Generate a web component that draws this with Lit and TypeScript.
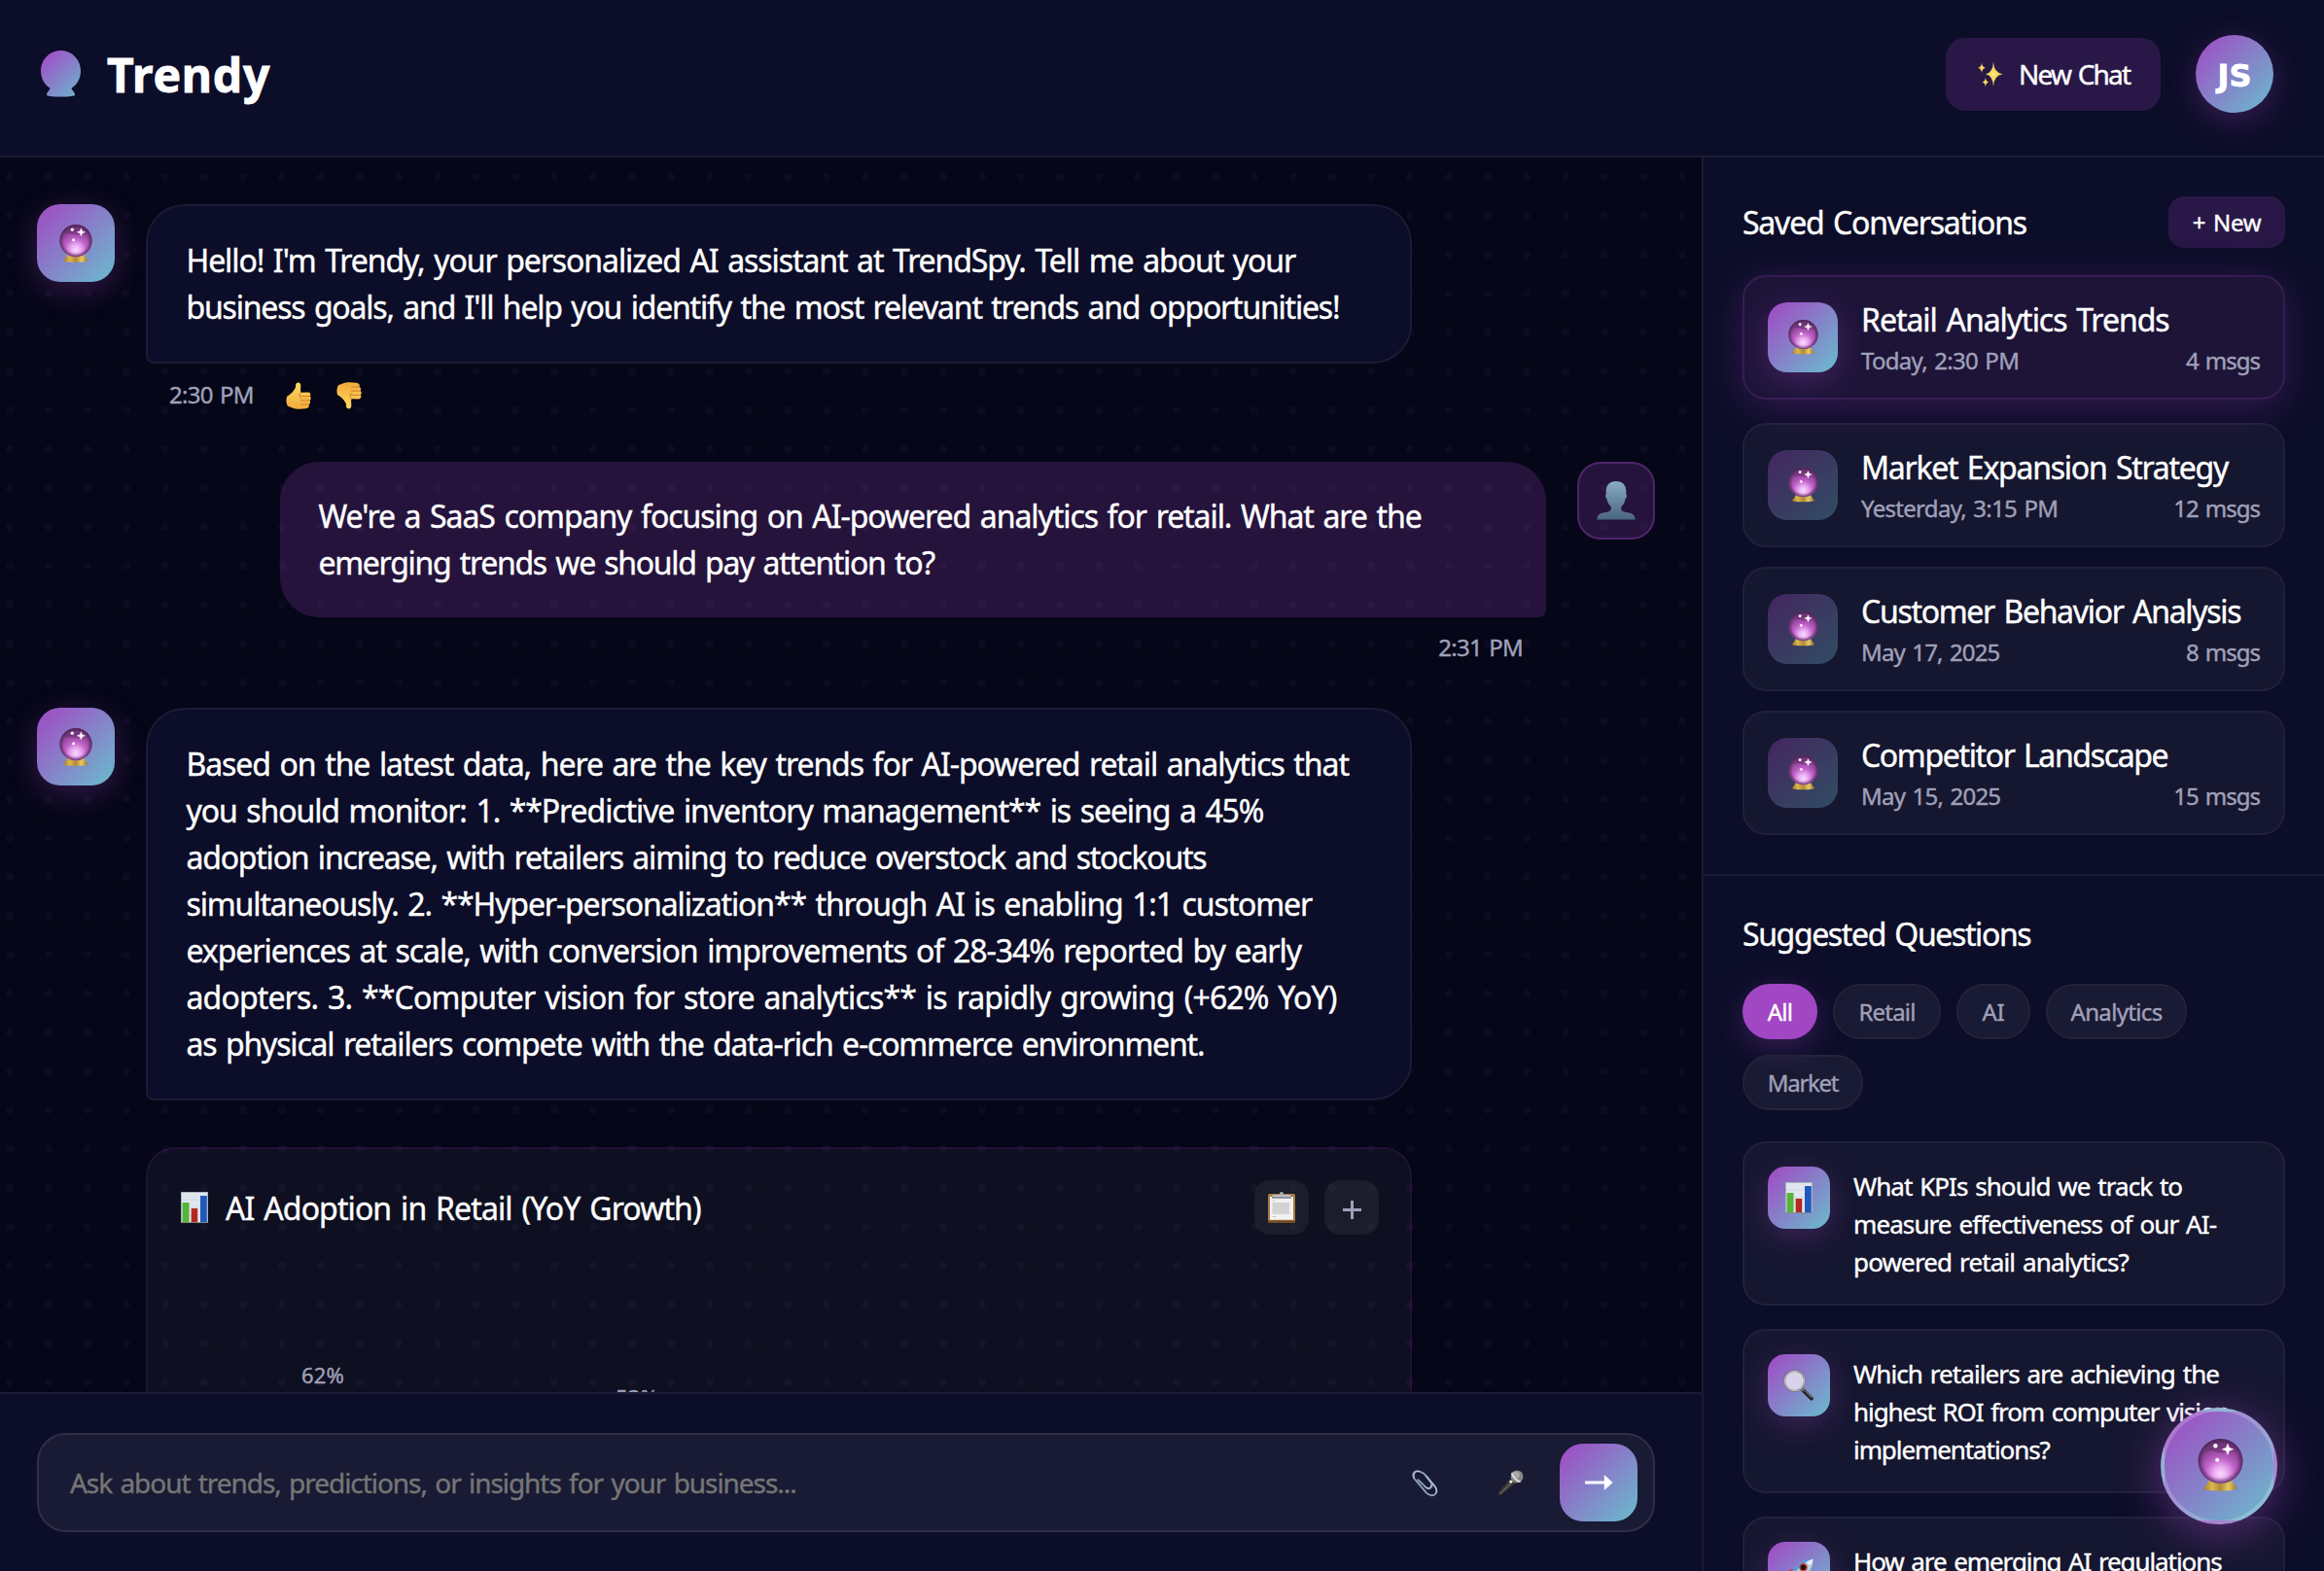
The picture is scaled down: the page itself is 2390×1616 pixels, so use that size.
import { LitElement, html, css, svg, nothing } from "lit";
import { customElement, property } from "lit/decorators.js";
import { classMap } from "lit/directives/class-map.js";

const crystalBall = svg`
  <defs>
    <radialGradient id="ball" cx="0.5" cy="0.78" r="0.8">
      <stop offset="0" stop-color="#fbd9ff"/>
      <stop offset="0.18" stop-color="#ecaef3"/>
      <stop offset="0.42" stop-color="#c062ca"/>
      <stop offset="0.7" stop-color="#8f4496"/>
      <stop offset="1" stop-color="#522860"/>
    </radialGradient>
    <radialGradient id="ballRim" cx="0.5" cy="0.5" r="0.5">
      <stop offset="0.74" stop-color="#5a2a62" stop-opacity="0"/>
      <stop offset="1" stop-color="#4a2254" stop-opacity="0.8"/>
    </radialGradient>
    <linearGradient id="ballStand" x1="0" y1="0" x2="1" y2="0">
      <stop offset="0" stop-color="#a87c2a"/>
      <stop offset="0.25" stop-color="#dcb850"/>
      <stop offset="0.5" stop-color="#b18a34"/>
      <stop offset="0.74" stop-color="#e8c964"/>
      <stop offset="1" stop-color="#98742a"/>
    </linearGradient>
  </defs>
  <path d="M8.200 31h17.600c.6 2.400 2 3.900 3.500 5.400.9 1.500-4 2.400-12.300 2.400S3.800 37.900 4.700 36.400C6.200 34.900 7.600 33.400 8.200 31Z" fill="url(#ballStand)"/>
  <circle cx="17" cy="16.600" r="16.600" fill="url(#ball)"/>
  <circle cx="17" cy="16.600" r="16.600" fill="url(#ballRim)"/>
  <path d="M6 10C9 3 25 2.500 28.500 10.500 24 7.500 21 11 17 10.500S9 7.500 6 10Z" fill="#4c2156" opacity=".35"/>
  <circle cx="13.300" cy="5.200" r="1.600" fill="#fff"/>
  <path d="M22.400 3.800l1.100 2.900 3 1.100-3 1.100-1.100 2.900-1.100-2.900-3-1.100 3-1.100Z" fill="#fff" stroke="#ffe6ff" stroke-width=".5"/>
  <circle cx="14.600" cy="15.700" r="1.500" fill="#fff" opacity=".95"/>`;

const thumb = svg`
  <defs><linearGradient id="thumbFill" x1="0" y1="0" x2="0" y2="1">
    <stop offset="0" stop-color="#ffdb62"/><stop offset="1" stop-color="#f2a93a"/>
  </linearGradient></defs>
  <path d="M10.800 1.200C12.600-.3 15.200.4 15.300 3.400 15.400 6.200 14.800 8 15.400 10.800L23 10.600C25.600 10.700 26 13.600 24.600 14.500 26.300 15.800 26 18 24.600 18.900 25.600 20.300 25.100 22.300 23.700 23 24.300 25.400 23 27 20.600 27.300 15 28.100 9.500 28 6 26.300L1.800 24.800C.2 21.500 0 17.500 1.200 14.800 4 13.300 8.600 9.300 9.900 5.600 10.200 4.200 9.700 2.200 10.800 1.200Z" fill="url(#thumbFill)"/>
  <path d="M15.400 14.600h9M15.200 18.900h9.200M15.600 23h8M15.400 10.900c-1.800 1.500-2 4-.2 5.500" fill="none" stroke="#c9792a" stroke-width=".9" stroke-linecap="round"/>`;

const ICONS: Record<string, { w: number; h: number; art: unknown }> = {
  ball: { w: 34, h: 39, art: crystalBall },
  up: { w: 26, h: 28, art: thumb },
  down: { w: 26, h: 28, art: svg`<g transform="matrix(1 0 0 -1 0 28)">${thumb}</g>` },
  logo: {
    w: 41, h: 48,
    art: svg`<defs><linearGradient id="logoFill" gradientUnits="userSpaceOnUse" x1="2" y1="2" x2="42" y2="44">
        <stop offset="0" stop-color="#a24ac5"/><stop offset="1" stop-color="#6cb4cf"/></linearGradient></defs>
      <path d="M20.500 0C32 0 41 9.400 41 21c0 7.800-3.900 14.300-9.600 17.800.6 2.300 3.700 4.400 3.700 6.600 0 1.400-6 2.200-14.600 2.200S5.900 46.800 5.900 45.400c0-2.200 3.100-4.300 3.700-6.600C3.900 35.300 0 28.800 0 21 0 9.400 9 0 20.500 0Z" fill="url(#logoFill)"/>`,
  },
  sparkles: {
    w: 28, h: 28,
    art: svg`<g fill="#f7d95c">
      <path d="M17 1.500Q17.500 12.800 26.500 14.300 17.500 15.800 17 27 16.500 15.800 9 14.300 16.500 12.800 17 1.500Z"/>
      <path d="M5 2.500Q5.400 7 9 7.800 5.400 8.600 5 13 4.600 8.600 1.200 7.800 4.600 7 5 2.500Z"/>
      <path d="M8.900 17.800Q9.200 21.800 12.400 22.500 9.200 23.200 8.900 27.500 8.600 23.200 5.400 22.500 8.600 21.800 8.900 17.800Z"/></g>
      <circle cx="17" cy="14.300" r="1.900" fill="#ffeb90"/>`,
  },
  chart: {
    w: 28, h: 32,
    art: svg`<rect width="28" height="32" fill="#dfe6ee"/><path d="M0 .5h28M.5 0v32M27.500 0v32" stroke="#aab4c2"/>
      <path d="M1 8h26M1 16h26M1 24h26" stroke="#cdd6e0" stroke-width=".8"/>
      <rect x="1.500" y="11" width="7" height="20.500" fill="#55b53a"/><rect x="10.700" y="17" width="6.500" height="14.500" fill="#b3281f"/>
      <rect x="20" y="4" width="6.800" height="27.500" fill="#2258bd"/><path d="M0 31.600h28" stroke="#6f7d74" stroke-width=".8"/>`,
  },
  user: {
    w: 40, h: 40,
    art: svg`<defs><linearGradient id="bust" x1="0" y1="0" x2="0" y2="1"><stop offset="0" stop-color="#8aabc7"/><stop offset="1" stop-color="#4a6482"/></linearGradient></defs>
      <path d="M20 0c6.500 0 10.300 4 10.300 10.400v3c1.200.6.700 3.700-.7 4.400-.6 4-2 6.300-4.300 8.400v2.600c0 2.200 2.600 2.700 6.700 3.400 4.400.8 7.400 1.800 7.700 7.400H.3c.3-5.600 3.300-6.600 7.700-7.400 4.100-.7 6.700-1.200 6.700-3.400v-2.600c-2.300-2.100-3.700-4.400-4.300-8.400-1.400-.7-1.900-3.800-.7-4.400v-3C9.700 4 13.500 0 20 0Z" fill="url(#bust)"/>
      <path d="M.3 39.400h39.400" stroke="#2f4560" stroke-width="1"/>`,
  },
  clipboard: {
    w: 28, h: 32,
    art: svg`<rect y="2" width="28" height="30" rx="1.500" fill="#a87c40"/><rect y="29.500" width="28" height="2.500" rx="1" fill="#6e4d20"/>
      <path d="M2 5h24v23.800H2z" fill="#f1f1f1"/><path d="M4.500 11h17.500v11l1 1H4.500z" fill="#d3d3d3"/>
      <path d="M4.500 9h3M4.500 25.500h4" stroke="#c8c8c8"/><path d="M5 3h18l1 3.200H4z" fill="#b9c0c8"/><path d="M4 6h20" stroke="#6d6d70" stroke-width="1.200"/>
      <circle cx="14" cy="2" r="2" fill="#a9afb8"/>`,
  },
  clip: {
    w: 28, h: 28,
    art: svg`<g fill="none" stroke-linecap="round"><path d="M13.800 5.200 20.500 13.800C23 17.500 19.500 22 15.500 19L6.500 10.500M13 4 8.200 1.600C3-.3-.8 4.500 2.600 9.400L15.500 24.500C19 28.300 24 27.800 25.700 25 27 22.800 26.300 20 24.500 17.500L14.500 5.500" stroke="#8fa3bd" stroke-width="1.900"/>
      <path d="M8.200 1.800C4.200.6 1.200 4 2.600 8M25.800 24.500C27 22 25.800 19.500 24 17L15.500 6.500M14 18.300c3.400 2.700 6.500.6 6.300-2.300" stroke="#d5dfea" stroke-width=".8"/></g>`,
  },
  mic: {
    w: 28, h: 28,
    art: svg`<path d="M15.300 7.500 20.800 13 3.600 26.700c-1.500.8-3.500-.8-2.700-2.700Z" fill="#3a3836"/>
      <path d="M15.500 8.500 18 10.500 3 25.200" stroke="#6e6a66" stroke-width="1.100" fill="none"/>
      <circle cx="20.800" cy="7.200" r="6.700" fill="#858585"/><circle cx="19.800" cy="5.400" r="3.800" fill="#a9a9a8"/>
      <path d="M15.200 3.400c1 4.200 4.800 8.200 9.300 9.200" stroke="#e6e6e4" stroke-width="1.600" fill="none"/><circle cx="14.300" cy="12.600" r="1.500" fill="#f4f2ee"/>`,
  },
  arrow: { w: 30, h: 17, art: svg`<path d="M0 6.800h20.500V0L29.500 8.300 20.500 16.600V9.800H0z" fill="#fff"/>` },
  search: {
    w: 32, h: 32,
    art: svg`<path d="M20.500 18.500 31 29c.6.900-1.700 3.200-2.800 2.600L18 21.500z" fill="#1f1f22"/><path d="M22 21.500 29.500 29" stroke="#6d6d72" stroke-width="1.200"/>
      <path d="M17.500 18l3.500 3.500" stroke="#77777a" stroke-width="2.600"/>
      <circle cx="11.500" cy="11.500" r="10.400" fill="#d9d3ea" stroke="#77797e" stroke-width="2"/><circle cx="11.500" cy="11.500" r="10.200" fill="none" stroke="#c9ccd0" stroke-width=".9"/>`,
  },
  rocket: {
    w: 32, h: 32,
    art: svg`<path d="M12 11.500C8 10.800 4.500 13 2.500 17.500l6.500-1zM20.500 20c.7 4-1.500 7.500-6 9.500l1-6.500z" fill="#d8362c"/>
      <path d="M31.300.8c.8 7.500-2.300 14.500-14.300 23.700L7.500 15C16.500 3.500 24 .2 31.300.8Z" fill="#b9cadb"/><path d="M31.300.8C24 .2 16.500 3.500 7.500 15l2.500 2.500C17 8 24 3 31.300.8Z" fill="#4b9ae0"/>
      <path d="M31.300.8c-3 .8-5 2-7 3.500l3.500 3.600c2-2.100 3.300-4.400 3.500-7.100Z" fill="#e8f0f7"/>
      <circle cx="20.800" cy="9.800" r="3.800" fill="#16161c" stroke="#d3402f" stroke-width="1.600"/><path d="M8 17l7 7-4 2.500L5.500 21z" fill="#e8542e"/><path d="M6 22l4 4-8 4.500z" fill="#f6b33c"/>`,
  },
};

@customElement("ui-icon")
class UiIcon extends LitElement {
  @property() name = "ball";
  @property({ type: Number }) width = 34;
  static styles = css`
    :host { display: inline-flex; flex: none; }
    svg { display: block; overflow: visible; }
  `;
  render() {
    const i = ICONS[this.name];
    return html`<svg width=${this.width} height=${(this.width * i.h) / i.w} viewBox="0 0 ${i.w} ${i.h}" aria-hidden="true">${i.art}</svg>`;
  }
}

/** A run of text with its average tracking in pixels. */
type Run = [text: string, tracking: number];

/** Extra width of each word space, in em; the letters give it back so a run keeps its length. */
const WORD_SPACE = 0.075;

const icon = (name: string, width: number) => html`<ui-icon name=${name} .width=${width}></ui-icon>`;
const run = ([text, tracking]: Run) => {
  const share = (WORD_SPACE * (text.split(" ").length - 1)) / text.length;
  return html`<span style="letter-spacing:calc(${tracking}px - ${share.toFixed(4)}em)">${text}</span>`;
};
const lines = (l: Run[]) => l.map((r, i) => html`${i ? html`<br>` : nothing}${run(r)}`);

const GREETING: Run[] = [
  ["Hello! I'm Trendy, your personalized AI assistant at TrendSpy. Tell me about your", -0.73],
  ["business goals, and I'll help you identify the most relevant trends and opportunities!", -0.87],
];
const QUESTION: Run[] = [
  ["We're a SaaS company focusing on AI-powered analytics for retail. What are the", -0.7],
  ["emerging trends we should pay attention to?", -0.97],
];
const ANSWER: Run[] = [
  ["Based on the latest data, here are the key trends for AI-powered retail analytics that", -0.69],
  ["you should monitor: 1. **Predictive inventory management** is seeing a 45%", -0.77],
  ["adoption increase, with retailers aiming to reduce overstock and stockouts", -0.93],
  ["simultaneously. 2. **Hyper-personalization** through AI is enabling 1:1 customer", -0.89],
  ["experiences at scale, with conversion improvements of 28-34% reported by early", -0.76],
  ["adopters. 3. **Computer vision for store analytics** is rapidly growing (+62% YoY)", -0.54],
  ["as physical retailers compete with the data-rich e-commerce environment.", -0.92],
];
const SAVED: { title: Run; when: Run; count: Run; active?: boolean }[] = [
  { title: ["Retail Analytics Trends", -0.82], when: ["Today, 2:30 PM", -0.45], count: ["4 msgs", -0.7], active: true },
  { title: ["Market Expansion Strategy", -1.06], when: ["Yesterday, 3:15 PM", -0.5], count: ["12 msgs", -0.75] },
  { title: ["Customer Behavior Analysis", -1.12], when: ["May 17, 2025", -0.52], count: ["8 msgs", -0.7] },
  { title: ["Competitor Landscape", -1.24], when: ["May 15, 2025", -0.45], count: ["15 msgs", -0.75] },
];
const CHIPS: { label: Run; width: number }[] = [
  { label: ["All", -0.7], width: 77 },
  { label: ["Retail", -0.8], width: 111 },
  { label: ["AI", -0.3], width: 76 },
  { label: ["Analytics", -0.65], width: 145 },
  { label: ["Market", -1.3], width: 124 },
];
const SUGGESTED: { icon: string; size: number; text: Run[] }[] = [
  { icon: "chart", size: 28, text: [["What KPIs should we track to", -0.6], ["measure effectiveness of our AI-", -0.66], ["powered retail analytics?", -0.7]] },
  { icon: "search", size: 32, text: [["Which retailers are achieving the", -0.67], ["highest ROI from computer vision", -0.83], ["implementations?", -1.08]] },
  { icon: "rocket", size: 30, text: [["How are emerging AI regulations", -0.83]] },
];

@customElement("app-root")
class AppRoot extends LitElement {
  static styles = css`
    :host {
      --purple: #a247c4;
      --grad: linear-gradient(135deg, #a247c4, #69bdcd);
      --glow: rgba(162, 71, 196, 0.3);
      --panel: #0c0d28;
      --line: #1a1b34;
      --muted: #a0a0b8;
      display: flex; flex-direction: column; width: 2390px; height: 1616px; overflow: hidden; position: relative;
      background: #050617; color: #fff;
      font-family: "Noto Sans", "Open Sans", sans-serif; font-size: 32px;
      -webkit-text-stroke: 0.4px currentColor;
    }
    * { box-sizing: border-box; word-spacing: 0.075em; }
    .header { flex: none; height: 162px; display: flex; align-items: center; padding: 36px 52px 44px 42px; background: var(--panel); border-bottom: 2px solid var(--line); }
    .brand { display: flex; align-items: center; gap: 27px; flex: 1; }
    .brand-name { font-size: 48px; font-weight: 700; letter-spacing: 0.8px; line-height: 56px; padding-top: 1px; -webkit-text-stroke-width: 0.9px; }
    .new-chat { display: flex; align-items: center; gap: 15px; width: 221px; height: 75px; padding-left: 32px; border-radius: 20px; background: rgba(162, 71, 196, 0.2); font-size: 28px; letter-spacing: -1.8px; white-space: nowrap; }
    .profile { width: 80px; height: 80px; margin-left: 36px; border-radius: 50%; background: var(--grad); box-shadow: 0 8px 32px var(--glow); display: flex; align-items: center; justify-content: center; padding-top: 3px; font: 700 32px "DejaVu Sans", sans-serif; letter-spacing: 0; -webkit-text-stroke-width: 0.8px; }
    .body { flex: 1; min-height: 0; display: flex; }
    .main { width: 1750px; display: flex; flex-direction: column; }
    .messages { flex: 1; min-height: 0; overflow: hidden; padding: 48px 48px 0 38px; display: flex; flex-direction: column; gap: 48px;
      background: radial-gradient(circle at 10px 20px, rgba(162, 71, 196, 0.055) 3.700px, transparent 4.500px) 0 0 / 40px 40px; }
    .message { flex: none; display: flex; gap: 32px; }
    .message.mine { flex-direction: row-reverse; }
    .avatar { flex: none; width: 80px; height: 80px; border-radius: 24px; display: flex; align-items: center; justify-content: center; background: var(--grad); box-shadow: 0 8px 32px var(--glow); }
    .mine .avatar { background: rgba(162, 71, 196, 0.21); border: 2px solid rgba(162, 71, 196, 0.34); box-shadow: none; }
    .column { width: 1302px; }
    .bubble { line-height: 48px; padding: 32px 40px 32px 39.500px; border: 2px solid var(--line); border-radius: 40px 40px 40px 8px; background: var(--panel); white-space: nowrap; }
    .mine .bubble { border: none; border-radius: 40px 40px 8px 40px; background: rgba(162, 71, 196, 0.21); }
    .meta { display: flex; align-items: center; height: 41px; margin-top: 12px; padding: 0 24px; font-size: 24px; letter-spacing: -0.75px; color: var(--muted); }
    .time { padding-bottom: 3px; }
    .mine .meta { height: 27px; margin-top: 18px; justify-content: flex-end; }
    .mine .time { padding-bottom: 2px; }
    .react { display: flex; gap: 26px; margin-left: 33px; }
    .chart { flex: none; margin-left: 112px; width: 1302px; height: 560px; padding: 32px; border: 2px solid rgba(162, 71, 196, 0.18); border-radius: 30px; background: rgba(255, 255, 255, 0.04); background-clip: padding-box; }
    .chart-head { display: flex; align-items: center; gap: 16px; height: 56px; }
    .chart-title { display: flex; align-items: center; gap: 18px; flex: 1; padding-left: 2px; letter-spacing: -0.9px; }
    .tool { width: 56px; height: 56px; border-radius: 16px; background: rgba(255, 255, 255, 0.055); display: flex; align-items: center; justify-content: center; color: var(--muted); }
    .plus { width: 19px; height: 19px; margin-top: 4px; background: linear-gradient(var(--muted), var(--muted)) center / 100% 3px no-repeat, linear-gradient(var(--muted), var(--muted)) center / 3px 100% no-repeat; }
    .plot { display: grid; grid-template-columns: 296px 350px 1fr; font-size: 22px; line-height: 26px; letter-spacing: 0.1px; color: var(--muted); text-align: center; }
    .value { padding-top: calc(131px + var(--drop)); }
    .composer { flex: none; height: 184px; padding: 40px 48px 40px 38px; background: var(--panel); border-top: 2px solid var(--line); }
    .field { display: flex; align-items: center; height: 102px; padding: 0 16px 0 32px; border: 2px solid #2f3047; border-radius: 30px; background: #191a33; }
    .placeholder { flex: 1; font-size: 28px; letter-spacing: -1.05px; color: #757575; }
    .ghost { width: 80px; height: 80px; margin-right: 8px; display: flex; align-items: center; justify-content: center; }
    .ghost.last { margin-right: 11px; }
    .send { width: 80px; height: 80px; border-radius: 24px; background: var(--grad); display: flex; align-items: center; justify-content: center; }
    .sidebar { width: 640px; border-left: 2px solid var(--line); background: var(--panel); overflow: hidden; }
    .section { padding: 40px; }
    .section + .section { border-top: 2px solid var(--line); }
    .row { display: flex; align-items: center; justify-content: space-between; }
    .heading { font-size: 32px; line-height: 40px; letter-spacing: -1.2px; }
    .sub { letter-spacing: -1.38px; margin-bottom: 31px; }
    .new { width: 120px; height: 53px; border-radius: 16px; background: rgba(162, 71, 196, 0.2); display: flex; align-items: center; justify-content: center; font-size: 24px; letter-spacing: -0.25px; }
    .saved { display: flex; flex-direction: column; gap: 20px; margin-top: 32px; }
    .card { display: flex; align-items: center; gap: 24px; height: 128px; padding: 24px; border: 2px solid #1f2039; border-radius: 24px; background: #15162f; }
    .card.active { position: relative; top: -4px; border-color: #371c52; background: #1d1438; box-shadow: 0 8px 40px rgba(162, 71, 196, 0.26); }
    .card-icon { flex: none; width: 72px; height: 72px; border-radius: 20px; display: flex; align-items: center; justify-content: center; background: linear-gradient(135deg, rgba(162, 71, 196, 0.33), rgba(105, 189, 205, 0.33)); }
    .active .card-icon { background: var(--grad); box-shadow: 0 8px 32px var(--glow); }
    .card-text { flex: 1; display: flex; flex-direction: column; gap: 8px; white-space: nowrap; }
    .card-title { line-height: 40px; }
    .card-meta { display: flex; justify-content: space-between; font-size: 24px; line-height: 28px; color: var(--muted); }
    .chips { display: flex; flex-wrap: wrap; gap: 16px; margin-bottom: 32px; }
    .chip { height: 57px; border: 2px solid #232439; border-radius: 40px; background: rgba(255, 255, 255, 0.055); background-clip: padding-box; color: var(--muted); font-size: 24px; display: flex; align-items: center; justify-content: center; }
    .chip.on { background: var(--purple); border-color: var(--purple); color: #fff; box-shadow: 0 8px 32px var(--glow); }
    .questions { display: flex; flex-direction: column; gap: 24px; }
    .question { height: 169px; padding: 24px; display: flex; gap: 24px; border: 2px solid #20213a; border-radius: 24px; background: #15162f; }
    .question-icon { flex: none; width: 64px; height: 64px; border-radius: 18px; background: var(--grad); box-shadow: 0 8px 32px var(--glow); display: flex; align-items: center; justify-content: center; }
    .question-text { padding-top: 1px; font-size: 26px; line-height: 39px; white-space: nowrap; }
    .fab { position: absolute; right: 48px; bottom: 48px; width: 120px; height: 120px; border-radius: 50%; border: 4px solid rgba(255, 255, 255, 0.2); background: var(--grad); box-shadow: 0 8px 48px rgba(162, 71, 196, 0.5); display: flex; align-items: center; justify-content: center; padding: 0 0 3px 2px; }
  `;

  private header() {
    return html`<header class="header">
      <div class="brand">${icon("logo", 41)}<span class="brand-name">Trendy</span></div>
      <div class="new-chat">${icon("sparkles", 28)}<span>New Chat</span></div>
      <div class="profile">JS</div>
    </header>`;
  }

  private chart() {
    return html`<section class="chart">
      <div class="chart-head">
        <div class="chart-title">${icon("chart", 28)}<span>AI Adoption in Retail (YoY Growth)</span></div>
        <div class="tool">${icon("clipboard", 28)}</div>
        <div class="tool"><i class="plus"></i></div>
      </div>
      <div class="plot">
        <div class="value" style="--drop:0px">62%</div>
        <div class="value" style="--drop:23px">53%</div>
      </div>
    </section>`;
  }

  render() {
    return html`
      ${this.header()}
      <div class="body">
        <main class="main">
          <div class="messages">
            <div class="message">
              <div class="avatar">${icon("ball", 34)}</div>
              <div class="column">
                <div class="bubble">${lines(GREETING)}</div>
                <div class="meta"><span class="time">2:30 PM</span><span class="react">${icon("up", 26)}${icon("down", 26)}</span></div>
              </div>
            </div>
            <div class="message mine">
              <div class="avatar">${icon("user", 40)}</div>
              <div class="column">
                <div class="bubble">${lines(QUESTION)}</div>
                <div class="meta"><span class="time">2:31 PM</span></div>
              </div>
            </div>
            <div class="message">
              <div class="avatar">${icon("ball", 34)}</div>
              <div class="column"><div class="bubble">${lines(ANSWER)}</div></div>
            </div>
            ${this.chart()}
          </div>
          <div class="composer">
            <div class="field">
              <span class="placeholder">Ask about trends, predictions, or insights for your business...</span>
              <span class="ghost">${icon("clip", 27)}</span>
              <span class="ghost last">${icon("mic", 27)}</span>
              <span class="send">${icon("arrow", 29)}</span>
            </div>
          </div>
        </main>
        <aside class="sidebar">
          <section class="section">
            <div class="row"><span class="heading">Saved Conversations</span><span class="new">+ New</span></div>
            <div class="saved">
              ${SAVED.map((s) => html`<div class=${classMap({ card: true, active: !!s.active })}>
                <div class="card-icon">${icon("ball", 31)}</div>
                <div class="card-text">
                  <div class="card-title">${run(s.title)}</div>
                  <div class="card-meta">${run(s.when)}${run(s.count)}</div>
                </div>
              </div>`)}
            </div>
          </section>
          <section class="section">
            <div class="heading sub">Suggested Questions</div>
            <div class="chips">
              ${CHIPS.map((c, i) => html`<span class=${classMap({ chip: true, on: i === 0 })} style="width:${c.width}px">${run(c.label)}</span>`)}
            </div>
            <div class="questions">
              ${SUGGESTED.map((q) => html`<div class="question">
                <div class="question-icon">${icon(q.icon, q.size)}</div>
                <div class="question-text">${lines(q.text)}</div>
              </div>`)}
            </div>
          </section>
        </aside>
      </div>
      <div class="fab">${icon("ball", 47)}</div>`;
  }
}
